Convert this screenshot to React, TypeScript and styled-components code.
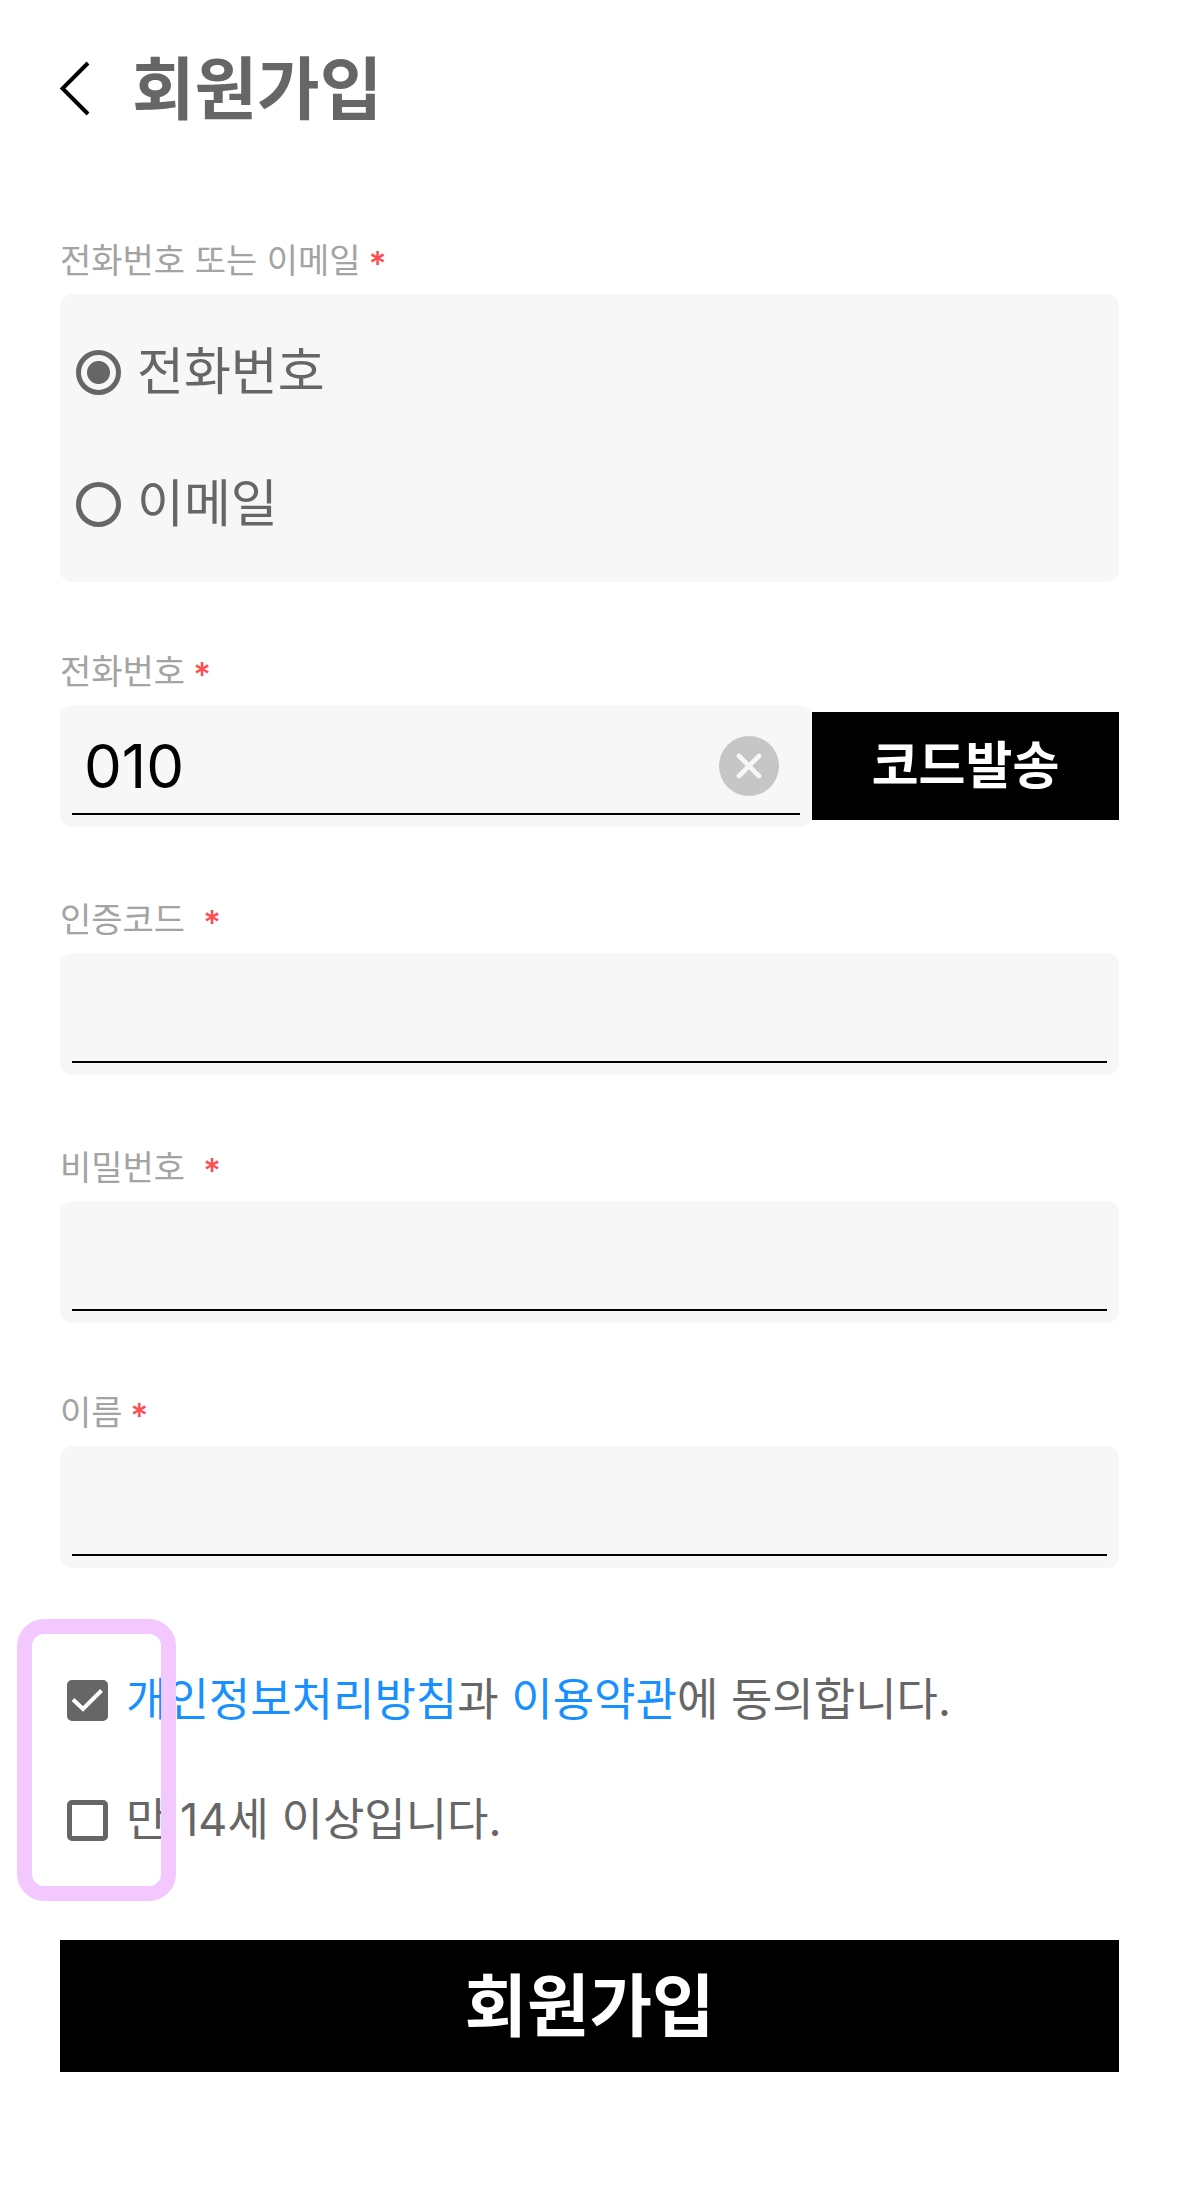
import React, { useState } from "react";
import styled, { createGlobalStyle } from "styled-components";

const GlobalStyle = createGlobalStyle`
  * { box-sizing: border-box; }
  body {
    margin: 0;
    background: #fff;
    color: #666;
    font-family: Inter, "Noto Sans CJK KR", sans-serif;
  }
  button, input { font: inherit; margin: 0; padding: 0; border: 0; }
`;

const Page = styled.main`
  padding: 40px 60px 112px;
`;

const Header = styled.header`
  display: flex;
  align-items: center;
  gap: 40px;
  height: 96px;
`;

const BackButton = styled.button`
  display: flex;
  background: none;
  color: #000;
  cursor: pointer;
`;

const Title = styled.h1`
  margin: 0;
  padding-top: 2px;
  font-size: 68px;
  line-height: 96px;
  font-weight: 700;
`;

const Form = styled.form`
  display: flex;
  flex-direction: column;
  padding-top: 100px;
`;

const Group = styled.fieldset`
  margin: 0;
  padding: 0;
  border: 0;
  min-width: 0;
`;

const Field = styled.div<{ $space: number }>`
  padding-top: ${(p) => p.$space}px;
`;

const labelText = `
  display: flex;
  align-items: center;
  height: 48px;
  padding: 2px 0 0;
  margin-bottom: 10px;
  color: #a3a3a3;
  font-size: 34px;
  line-height: 48px;
`;

const Legend = styled.legend`
  ${labelText}
`;

const Label = styled.label`
  ${labelText}
`;

const Star = styled.span<{ $wide?: boolean }>`
  margin-left: ${(p) => (p.$wide ? 18 : 8)}px;
  padding-top: 6px;
  color: #ff4d4f;
  font-size: 34px;
  line-height: 40px;
  font-weight: 500;
`;

const ChoiceBox = styled.div`
  display: flex;
  flex-direction: column;
  gap: 60px;
  padding: 42px 16px 42px;
  border-radius: 12px;
  background: #f7f7f7;
`;

const Choice = styled.label`
  display: flex;
  align-items: center;
  gap: 16px;
  font-size: 51px;
  line-height: 72px;
`;

const Radio = styled.input`
  appearance: none;
  flex: none;
  width: 45px;
  height: 45px;
  border: 5px solid #666;
  border-radius: 50%;
  &:checked {
    background: radial-gradient(circle, #666 11px, transparent 12px);
  }
`;

const InputRow = styled.div`
  display: flex;
  align-items: center;
`;

const InputBox = styled.div`
  flex: 1;
  min-width: 0;
  padding: 12px;
  border-radius: 12px;
  background: #f7f7f7;
`;

const InputLine = styled.div`
  display: flex;
  align-items: center;
  height: 98px;
  padding: 2px 21px 0 12px;
  border-bottom: 2px solid #000;
`;

const TextInput = styled.input`
  flex: 1;
  min-width: 0;
  height: 80px;
  background: none;
  color: #000;
  font-size: 60px;
  outline: none;
`;

const ClearButton = styled.button`
  display: flex;
  flex: none;
  background: none;
  cursor: pointer;
`;

const SendButton = styled.button`
  flex: none;
  width: 307px;
  height: 108px;
  background: #000;
  color: #fff;
  font-size: 51px;
  line-height: 72px;
  font-weight: 700;
  cursor: pointer;
`;

const Agreements = styled.div`
  position: relative;
  display: flex;
  flex-direction: column;
  gap: 56px;
  padding: 100px 0 88px 7px;
`;

const Agreement = styled.div`
  display: flex;
  align-items: center;
  gap: 18px;
  font-size: 45px;
  line-height: 64px;
`;

const CheckWrap = styled.span`
  display: grid;
  flex: none;
  & > * { grid-area: 1 / 1; }
  svg { pointer-events: none; }
`;

const Checkbox = styled.input`
  appearance: none;
  width: 41px;
  height: 41px;
  border: 5px solid #666;
  border-radius: 5px;
  &:checked { background: #666; }
`;

const TextLink = styled.a`
  color: #1890ff;
  text-decoration: none;
`;

const Highlight = styled.div`
  position: absolute;
  top: 51px;
  left: -43px;
  width: 159px;
  height: 282px;
  border: 15px solid #f2c8ff;
  border-radius: 27px;
  pointer-events: none;
`;

const SubmitButton = styled.button`
  height: 132px;
  background: #000;
  color: #fff;
  font-size: 68px;
  line-height: 96px;
  font-weight: 700;
  cursor: pointer;
`;

function Check({ id, defaultChecked, label }: { id: string; defaultChecked?: boolean; label?: string }) {
  const [on, setOn] = useState(!!defaultChecked);
  return (
    <CheckWrap>
      <Checkbox id={id} type="checkbox" aria-label={label} checked={on} onChange={(e) => setOn(e.target.checked)} />
      {on && (
        <svg width="41" height="41" viewBox="0 0 41 41" fill="none" stroke="#fff" strokeWidth="4" aria-hidden="true">
          <path d="M6 19.5 L16 29 L34.5 10.5" />
        </svg>
      )}
    </CheckWrap>
  );
}

function InputField({ id, label, type, space, wide }: { id: string; label: string; type: string; space: number; wide?: boolean }) {
  return (
    <Field $space={space}>
      <Label htmlFor={id}>
        {label}
        <Star $wide={wide}>*</Star>
      </Label>
      <InputBox>
        <InputLine>
          <TextInput id={id} type={type} />
        </InputLine>
      </InputBox>
    </Field>
  );
}

export default function App() {
  const [phone, setPhone] = useState("010");
  return (
    <>
      <GlobalStyle />
      <Page>
        <Header>
          <BackButton type="button" aria-label="뒤로">
            <svg width="32" height="56" viewBox="0 0 32 56" fill="none" stroke="currentColor" strokeWidth="4">
              <path d="M28 3 L2.5 28.5 L28 54" />
            </svg>
          </BackButton>
          <Title>회원가입</Title>
        </Header>
        <Form onSubmit={(e) => e.preventDefault()}>
          <Group>
            <Legend>
              전화번호 또는 이메일
              <Star>*</Star>
            </Legend>
            <ChoiceBox>
              <Choice>
                <Radio type="radio" name="method" defaultChecked />
                전화번호
              </Choice>
              <Choice>
                <Radio type="radio" name="method" />
                이메일
              </Choice>
            </ChoiceBox>
          </Group>

          <Field $space={65}>
            <Label htmlFor="phone">
              전화번호
              <Star>*</Star>
            </Label>
            <InputRow>
              <InputBox>
                <InputLine>
                  <TextInput id="phone" type="tel" value={phone} onChange={(e) => setPhone(e.target.value)} />
                  <ClearButton type="button" aria-label="지우기" onClick={() => setPhone("")}>
                    <svg width="60" height="60" viewBox="0 0 60 60">
                      <circle cx="30" cy="30" r="30" fill="#c6c6c6" />
                      <path d="M20 20 L40 40 M40 20 L20 40" stroke="#f7f7f7" strokeWidth="4.6" strokeLinecap="round" />
                    </svg>
                  </ClearButton>
                </InputLine>
              </InputBox>
              <SendButton type="button">코드발송</SendButton>
            </InputRow>
          </Field>

          <InputField id="code" label="인증코드" type="text" space={68} wide />
          <InputField id="password" label="비밀번호" type="password" space={68} wide />
          <InputField id="name" label="이름" type="text" space={65} />

          <Agreements>
            <Agreement>
              <Check id="terms" label="개인정보처리방침과 이용약관에 동의합니다." defaultChecked />
              <span>
                <TextLink href="#privacy">개인정보처리방침</TextLink>과 <TextLink href="#terms">이용약관</TextLink>에 동의합니다.
              </span>
            </Agreement>
            <Agreement>
              <Check id="age" />
              <label htmlFor="age">만 14세 이상입니다.</label>
            </Agreement>
            <Highlight />
          </Agreements>

          <SubmitButton type="submit">회원가입</SubmitButton>
        </Form>
      </Page>
    </>
  );
}
